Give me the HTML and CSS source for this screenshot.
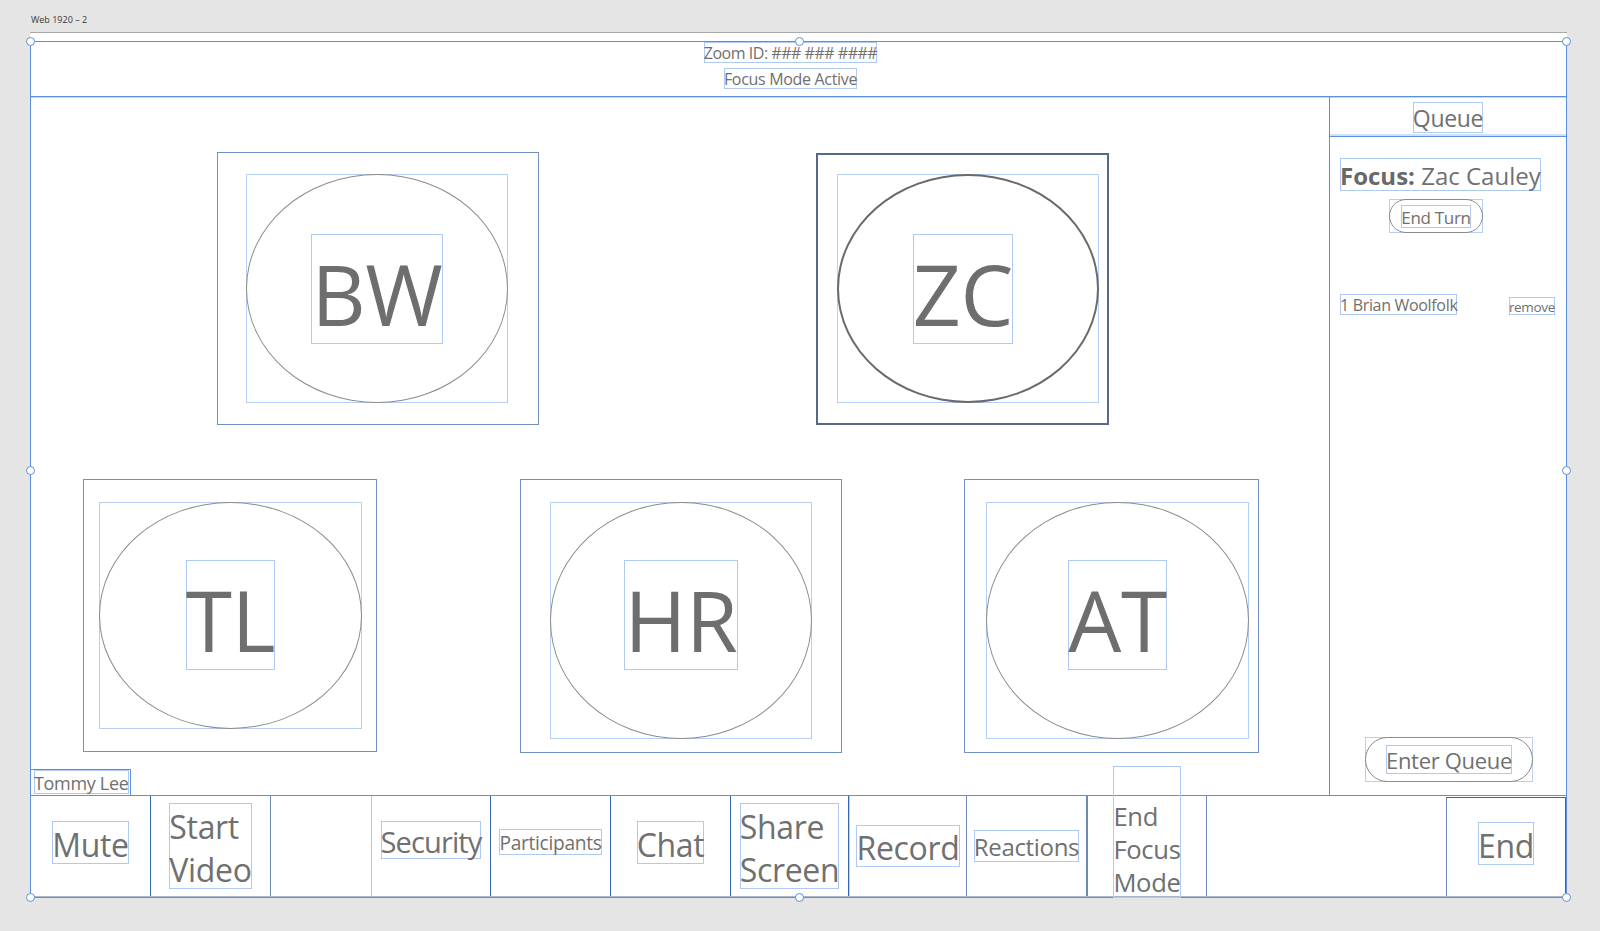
FILE: index.html
```html
<!DOCTYPE html>
<html lang="en">
<head>
<meta charset="utf-8">
<title>Web 1920 – 2</title>
<link rel="stylesheet" href="styles.css">
</head>
<body>
<div class="board-label">Web 1920 – 2</div>
<div class="artboard">
  <div class="frame">
    <header class="topbar">
      <span class="gbox meeting-id">Zoom ID: ### ### ####</span>
      <span class="gbox mode">Focus Mode Active</span>
    </header>

    <div class="main">
      <section class="stage">
        <div class="row row1">
          <div class="tile t-bw">
            <div class="guide">
              <div class="ellipse e-top"><span class="gbox initials">BW</span></div>
            </div>
          </div>
          <div class="tile t-zc">
            <div class="guide">
              <div class="ellipse e-top e-active"><span class="gbox initials i-zc">ZC</span></div>
            </div>
          </div>
        </div>
        <div class="row row2">
          <div class="tile t-tl">
            <div class="guide g-tl">
              <div class="ellipse"><span class="gbox initials">TL</span></div>
            </div>
          </div>
          <div class="tile t-hr">
            <div class="guide g-tall">
              <div class="ellipse"><span class="gbox initials">HR</span></div>
            </div>
          </div>
          <div class="tile t-at">
            <div class="guide g-tall g-wide">
              <div class="ellipse"><span class="gbox initials">AT</span></div>
            </div>
          </div>
        </div>
        <div class="self-name"><span class="gbox">Tommy Lee</span></div>
      </section>

      <aside class="queue">
        <div class="q-head"><span class="gbox">Queue</span></div>
        <div class="q-focus gbox"><b>Focus:</b> Zac Cauley</div>
        <div class="pill-wrap end-turn">
          <div class="pill"><span class="gbox">End Turn</span></div>
        </div>
        <div class="q-item">
          <span class="gbox q-name">1 Brian Woolfolk</span>
          <span class="gbox q-remove">remove</span>
        </div>
        <div class="pill-wrap enter-queue">
          <div class="pill"><span class="gbox">Enter Queue</span></div>
        </div>
      </aside>
    </div>

    <footer class="toolbar">
      <div class="cell c-mute raise"><span class="gbox">Mute</span></div>
      <div class="cell c-video"><span class="gbox two-line">Start Video</span></div>
      <div class="gap-left"></div>
      <div class="cell c-security raise-more"><span class="gbox">Security</span></div>
      <div class="cell c-participants raise"><span class="gbox">Participants</span></div>
      <div class="cell c-chat raise"><span class="gbox">Chat</span></div>
      <div class="cell c-share"><span class="gbox two-line">Share Screen</span></div>
      <div class="cell c-record"><span class="gbox">Record</span></div>
      <div class="cell c-reactions"><span class="gbox">Reactions</span></div>
      <div class="cell c-efm"><span class="gbox efm-text">End Focus Mode</span></div>
      <div class="gap-right"></div>
      <div class="cell c-end raise"><span class="gbox">End</span></div>
    </footer>

    <span class="handle h-tl"></span>
    <span class="handle h-tm"></span>
    <span class="handle h-tr"></span>
    <span class="handle h-ml"></span>
    <span class="handle h-mr"></span>
    <span class="handle h-bl"></span>
    <span class="handle h-bm"></span>
    <span class="handle h-br"></span>
  </div>
</div>
</body>
</html>
```

FILE: styles.css
```css
* { box-sizing: border-box; }

html, body { margin: 0; }

body {
  width: 1600px;
  height: 931px;
  overflow: hidden;
  background: #e5e5e5;
  padding: 14px 0 0 30px;
  font-family: "Open Sans", "Noto Sans", sans-serif;
  color: #707070;
  letter-spacing: -0.02em;
}

.board-label {
  font-size: 9px;
  line-height: 12px;
  color: #3a3a3a;
  margin: 0 0 6px 1px;
  letter-spacing: 0;
}

.artboard {
  width: 1537px;
  height: 866px;
  background: #fff;
  border-top: 1px solid #a9a9a9;
  padding-top: 8px;
}

.frame {
  position: relative;
  height: 857px;
  border: 1px solid #5b8fe0;
  display: flex;
  flex-direction: column;
}

.gbox {
  display: inline-block;
  box-shadow: inset 0 0 0 1px #aecaf3;
}

/* ---------- top bar ---------- */
.topbar {
  flex: none;
  height: 55px;
  border-bottom: 1px solid #5b8fe0;
  box-shadow: 0 1px 0 #c5d8f4;
  display: flex;
  flex-direction: column;
  align-items: center;
  gap: 5px;
  padding-right: 16px;
  font-size: 16px;
  line-height: 21px;
}
.topbar .gbox { height: 21px; padding-top: 1px; }
.topbar .meeting-id { letter-spacing: -0.03em; }

/* ---------- main ---------- */
.main {
  flex: none;
  height: 698px;
  display: flex;
}

.stage {
  flex: 1;
  display: flex;
  flex-direction: column;
  padding-top: 55px;
}

.row { display: flex; align-items: flex-start; }
.row2 { margin-top: 54px; }

.tile {
  flex: none;
  height: 273px;
  border: 1px solid #7290c2;
}
.t-bw { margin-left: 186px; width: 322px; padding: 21px 0 0 28px; }
.t-zc {
  margin-left: 277px;
  margin-top: 1px;
  width: 293px;
  height: 272px;
  border: 2px solid #56698b;
  padding: 19px 0 0 19px;
}
.t-tl { margin-left: 52px; width: 294px; padding: 22px 0 0 15px; }
.t-hr { margin-left: 143px; width: 322px; height: 274px; padding: 22px 0 0 29px; }
.t-at { margin-left: 122px; width: 295px; height: 274px; padding: 22px 0 0 21px; }

.guide {
  width: 262px;
  height: 229px;
  box-shadow: inset 0 0 0 1px #b6d0f5;
}
.g-tl { width: 263px; height: 227px; }
.g-tall { height: 237px; }
.g-wide { width: 263px; }

.ellipse {
  width: 100%;
  height: 100%;
  border: 1px solid #8c8c8c;
  border-radius: 50%;
  display: flex;
  justify-content: center;
  align-items: flex-start;
  padding-top: 57px;
}
.e-top { padding-top: 59px; }
.e-active { border: 2px solid #6a6a6a; padding-top: 58px; }

.initials {
  font-size: 84px;
  line-height: 110px;
  height: 110px;
  padding-top: 5px;
  color: #6e6e6e;
}
.i-zc { margin-right: 10px; }

.self-name {
  margin-top: auto;
  margin-left: -1px;
  align-self: flex-start;
  width: 101px;
  height: 26px;
  border: 1px solid #5b8fe0;
  border-bottom: none;
  padding-left: 3px;
  font-size: 18px;
  line-height: 24px;
}
.self-name .gbox { height: 24px; padding-top: 1px; }

/* ---------- queue sidebar ---------- */
.queue {
  flex: none;
  width: 237px;
  border-left: 1px solid #5b8fe0;
  display: flex;
  flex-direction: column;
  align-items: flex-start;
}

.q-head {
  align-self: stretch;
  height: 40px;
  border-bottom: 1px solid #5b8fe0;
  box-shadow: inset 0 -2px 0 #d3e1f5;
  text-align: center;
  padding-top: 5px;
  font-size: 23px;
  line-height: 31px;
}
.q-head .gbox { height: 31px; padding-top: 1px; }

.q-focus {
  margin: 21px 0 0 10px;
  font-size: 24px;
  line-height: 33px;
  height: 33px;
  padding-top: 1px;
  white-space: nowrap;
  letter-spacing: 0;
}
.q-focus b { font-weight: 700; color: #686868; }

.pill-wrap {
  box-shadow: inset 0 0 0 1px #b6d0f5;
}
.pill {
  width: 100%;
  height: 100%;
  border: 1px solid #8c8c8c;
  display: flex;
  align-items: center;
  justify-content: center;
}

.end-turn {
  margin: 8px 0 0 59px;
  width: 94px;
  height: 34px;
}
.end-turn .pill { border-radius: 17px; font-size: 17px; line-height: 23px; }
.end-turn .gbox { height: 23px; padding-top: 1px; }

.q-item {
  align-self: stretch;
  margin-top: 61px;
  padding: 0 11px 0 10px;
  display: flex;
  justify-content: space-between;
  align-items: flex-end;
}
.q-name { font-size: 16px; line-height: 21px; height: 21px; padding-top: 1px; }
.q-remove { font-size: 13.5px; line-height: 18px; height: 18px; padding-top: 1px; }

.enter-queue {
  margin: auto 0 13px 35px;
  width: 168px;
  height: 45px;
}
.enter-queue .pill { border-radius: 23px; font-size: 22px; line-height: 29px; }
.enter-queue .gbox { height: 29px; padding-top: 1px; }

/* ---------- toolbar ---------- */
.toolbar {
  flex: none;
  height: 102px;
  display: flex;
  border-top: 1px solid #5b8fe0;
  border-bottom: 1px solid #aab7ca;
}

.cell {
  flex: none;
  width: 120px;
  display: flex;
  align-items: center;
  justify-content: center;
  border-right: 1px solid #3568b0;
  font-size: 32px;
  line-height: 43px;
}
.cell .gbox { height: 43px; padding-top: 2px; }
.raise { padding-bottom: 8px; }
.raise-more { padding-bottom: 13px; }

.cell .two-line { width: min-content; height: 86px; }

.c-video { border-right-color: #6f89b5; }
.gap-left { flex: none; width: 100px; }
.c-security { border-left: 1px solid #b9c4d6; font-size: 29px; line-height: 38px; }
.c-security .gbox { height: 38px; letter-spacing: -0.03em; }
.c-participants { font-size: 19.2px; line-height: 26px; }
.c-participants .gbox { height: 26px; padding-top: 1px; }
.c-share { width: 118px; }
.c-record {
  width: 118px;
  border-left: 1px solid #c3cddc;
  border-right-color: #6f89b5;
  line-height: 42px;
}
.c-record .gbox { height: 42px; }
.c-reactions { border-right-color: #6f89b5; font-size: 24px; line-height: 32px; }
.c-reactions .gbox { height: 32px; padding-top: 1px; }
.c-efm {
  border-left: 1px solid #6f89b5;
  border-right-color: #6f89b5;
  align-items: flex-start;
}
.cell .efm-text {
  width: min-content;
  height: 132px;
  margin-top: -30px;
  padding-top: 34px;
  font-size: 25.6px;
  line-height: 33px;
}
.gap-right { flex: 1; }
.c-end {
  border-left: 1px solid #6f89b5;
  border-top: 1px solid #3568b0;
  margin-top: 1px;
}

/* ---------- selection handles ---------- */
.handle {
  position: absolute;
  width: 9px;
  height: 9px;
  border: 1px solid #5b8fe0;
  border-radius: 50%;
  background: #fff;
}
.h-tl { left: -5px; top: -5px; }
.h-tm { left: calc(50% - 4px); top: -5px; }
.h-tr { right: -5px; top: -5px; }
.h-ml { left: -5px; top: calc(50% - 4px); }
.h-mr { right: -5px; top: calc(50% - 4px); }
.h-bl { left: -5px; bottom: -5px; }
.h-bm { left: calc(50% - 4px); bottom: -5px; }
.h-br { right: -5px; bottom: -5px; }
```
